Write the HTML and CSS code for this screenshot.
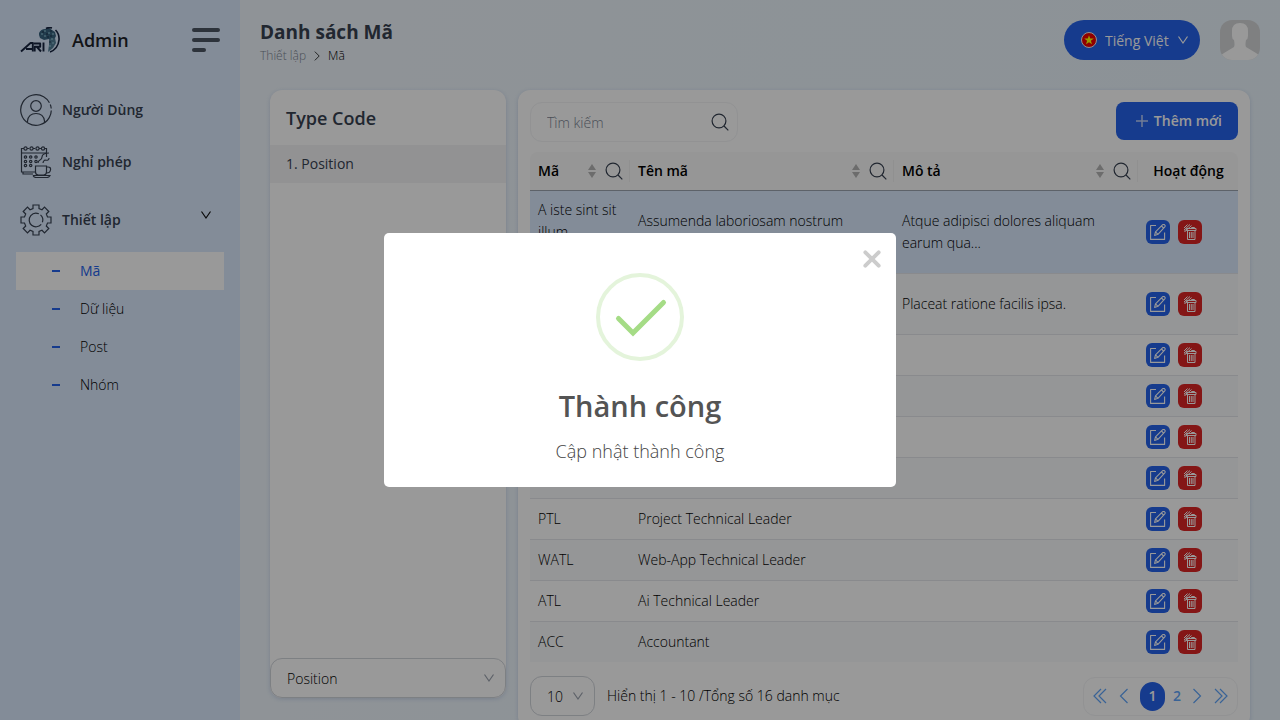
FILE: index.html
```html
<!DOCTYPE html>
<html lang="vi">
<head>
<meta charset="utf-8">
<meta name="viewport" content="width=device-width, initial-scale=1">
<title>Danh sách Mã</title>
<link rel="stylesheet" href="styles.css">
</head>
<body>
<svg class="sprite" aria-hidden="true">
  <symbol id="chevron" viewBox="0 0 12 12"><path d="M1.500 2.500 6 9l4.500-6.500" fill="none" stroke="currentColor" stroke-width="1.200"/></symbol>
  <symbol id="next" viewBox="0 0 16 16"><path d="m4.500 1 7 7-7 7" fill="none" stroke="currentColor" stroke-width="1.200"/></symbol>
  <symbol id="prev" viewBox="0 0 16 16"><path d="m11.500 1-7 7 7 7" fill="none" stroke="currentColor" stroke-width="1.200"/></symbol>
  <symbol id="last" viewBox="0 0 16 16"><path d="m2 1 7 7-7 7M7 1l7 7-7 7" fill="none" stroke="currentColor" stroke-width="1.200"/></symbol>
  <symbol id="first" viewBox="0 0 16 16"><path d="M14 1 7 8l7 7M9 1 2 8l7 7" fill="none" stroke="currentColor" stroke-width="1.200"/></symbol>
  <symbol id="search" viewBox="0 0 18 18"><g fill="none" stroke="currentColor" stroke-width="1.200"><circle cx="8" cy="8" r="6.900"/><path d="m13 13 4.300 4.300"/></g></symbol>
  <symbol id="sort" viewBox="0 0 8 14"><path d="M4 0l4 6H0zM4 14l4-6H0z" fill="currentColor"/></symbol>
  <symbol id="edit" viewBox="0 0 16 16"><g fill="none" stroke="currentColor" stroke-width="1.100" stroke-linejoin="round"><path d="M6 1.500H.600v13.900h14V8.500"/><path d="m4.600 11.400.900-3.600L12.700.700q1.200-.700 2 .200.900.900.100 1.900L8 10.300zM11.500 2l2.300 2.300M5.500 7.800 8 10.300"/></g></symbol>
  <symbol id="trash" viewBox="0 0 16 16"><g fill="none" stroke="currentColor" stroke-linejoin="round"><path d="M4.500 4.500h9.500v2H4.500zM5.500 6.500v9h7.500v-9M7.500 8v6M9.250 8v6M11 8v6M9.500 4.500v-1h3v1"/><path d="M2 4 5.500.500M2 6 8 .500M3 7.500 9.500 1.500M2 7.500l1.500-1.300"/></g></symbol>
</svg>

<div class="app">
  <aside class="sidebar">
    <div class="brand">
      <svg class="logo" viewBox="0 0 40 26" role="img" aria-label="ARI">
        <g fill="none" stroke="#16233f" stroke-width="1.900" stroke-linejoin="round">
          <path d="m1 24.500 9.500-8.500h2.300v8.500M6 22h6.500"/><path d="M13.500 16.500h6.700v3.300h-5.500v4.700M17 20l4 4.500M23.500 15.500v9"/>
        </g>
        <path d="M19 6q2-4 6-4l4-1 6 4 1 4-2 4-4 1-1-2-5 1-4-2-1-3z" fill="#38637f"/>
        <path d="m29 12 6-1 1 5-3 5-5 4 1-7z" fill="#527e96"/>
        <path d="M26 1.500q3-1.500 6-.500M35.500 3q4 4 3.500 10-1 9-9 12" fill="none" stroke="#16233f" stroke-width="1.600"/>
        <g fill="#a2dae6"><circle cx="22" cy="7" r=".800"/><circle cx="25" cy="4" r=".800"/><circle cx="29" cy="6" r=".800"/><circle cx="25" cy="9" r=".800"/><circle cx="33" cy="7" r=".800"/><circle cx="32" cy="12" r=".800"/><circle cx="33" cy="16" r=".800"/><circle cx="30" cy="19" r=".800"/></g>
        <g fill="#16233f"><circle cx="23" cy="5" r=".700"/><circle cx="27" cy="7" r=".700"/><circle cx="31" cy="9" r=".700"/><circle cx="31" cy="4" r=".700"/><circle cx="28" cy="10" r=".700"/><circle cx="30" cy="15" r=".700"/></g>
      </svg>
      <span class="brand-name">Admin</span>
      <button class="menu-toggle" type="button" aria-label="Menu"><i></i><i></i><i></i></button>
    </div>
    <nav>
      <a class="nav-item" href="#users">
        <svg viewBox="0 0 32 32" class="nav-icon"><circle cx="16" cy="16" r="15.300" stroke-dasharray="80 2 4 2 8.130" transform="rotate(30 16 16)"/><circle cx="16" cy="12" r="5.300"/><path d="M7.500 28v-1q1-7.500 8.500-7.500t8.500 7.500v1"/></svg>
        Người Dùng
      </a>
      <a class="nav-item" href="#leave">
        <svg viewBox="0 0 32 32" class="nav-icon"><path d="M4 2.500H1.500V26H16M1.500 7h25M7 2.500h2m4 0h2m4 0h2m4 0h1.500V11M3 26v2h10"/><g><circle cx="5.500" cy="2.500" r="1.600"/><circle cx="11.500" cy="2.500" r="1.600"/><circle cx="17.500" cy="2.500" r="1.600"/><circle cx="23" cy="2.500" r="1.600"/></g><g><circle cx="5.500" cy="11" r="1.200"/><circle cx="10.700" cy="11" r="1.200"/><circle cx="16" cy="11" r="1.200"/><circle cx="5.500" cy="15.500" r="1.200"/><circle cx="10.700" cy="15.500" r="1.200"/><circle cx="16" cy="15.500" r="1.200"/><circle cx="5.500" cy="19.500" r="1.200"/><circle cx="10.700" cy="19.500" r="1.200"/></g><path d="M15.500 20h11v6q0 3-3 3h-5q-3 0-3-3zM26.500 21h1.500q3 0 2.500 3-.500 3-4 3M13 29.500h17q-1 2-3 2H16q-2 0-3-2M18 17q0-2 2-3t2-3 2-3q2-1 5-1M23 17q0-2 2-3 4 1 4-2"/></svg>
        Nghỉ phép
      </a>
      <a class="nav-item nav-group" href="#settings">
        <svg viewBox="0 0 32 32" class="nav-icon"><path d="M13 1h6v3.500l3 1.200 2.500-2.500 4.300 4.300-2.500 2.500 1.200 3H31v6h-3.500l-1.200 3 2.500 2.500-4.300 4.300-2.500-2.500-3 1.200V31h-6v-3.500l-3-1.200-2.500 2.500-4.300-4.300L5.700 22l-1.200-3H1v-6h3.500l1.200-3-2.500-2.500 4.300-4.300L10 5.700l3-1.200z"/><circle cx="16" cy="16" r="6.800" stroke-dasharray="30 2 8 2.730" transform="rotate(40 16 16)"/></svg>
        <span>Thiết lập</span>
        <svg class="chev"><use href="#chevron"/></svg>
      </a>
      <ul class="subnav">
        <li><a class="active" href="#code">Mã</a></li>
        <li><a href="#data">Dữ liệu</a></li>
        <li><a href="#post">Post</a></li>
        <li><a href="#group">Nhóm</a></li>
      </ul>
    </nav>
  </aside>

  <main class="main">
    <header class="topbar">
      <div class="heading">
        <h1>Danh sách Mã</h1>
        <div class="crumbs"><a href="#settings">Thiết lập</a><svg><use href="#next"/></svg><span>Mã</span></div>
      </div>
      <div class="lang">
        <svg class="flag" viewBox="0 0 16 16"><circle cx="8" cy="8" r="7.500" fill="#f00000" stroke="#eee"/><path d="m8 3.200 1.200 3.400h3.600L9.900 8.800l1.100 3.500-3-2.100-3 2.100 1.100-3.500-2.900-2.200h3.600z" fill="#ff0"/></svg>
        <select aria-label="Ngôn ngữ"><option>Tiếng Việt</option></select>
        <svg class="chev"><use href="#chevron"/></svg>
      </div>
      <svg class="avatar" viewBox="0 0 40 40" role="img" aria-label="Avatar"><path d="M0 0h40v40H0z" fill="#d4d6d8"/><path d="M20 3q8 0 8 8v5q0 3-2 4-1 5 0 7l10 6 4 3v4H0v-4l4-3 10-6q1-2 0-7-2-1-2-4v-5q0-8 8-8" fill="#fff"/></svg>
    </header>

    <div class="content">
      <section class="card types">
        <h2>Type Code</h2>
        <a class="type" href="#position">1. Position</a>
        <div class="select-box types-select">
          <select aria-label="Type Code"><option>Position</option></select>
          <svg class="chev"><use href="#chevron"/></svg>
        </div>
      </section>

      <section class="card list">
        <div class="toolbar">
          <label class="search"><input type="text" placeholder="Tìm kiếm" aria-label="Tìm kiếm"><svg class="glass"><use href="#search"/></svg></label>
          <button class="add" type="button"><svg viewBox="0 0 12 12"><path d="M6 0v12M0 6h12" stroke="currentColor" stroke-width="1.500"/></svg>Thêm mới</button>
        </div>
        <table>
          <colgroup><col class="c-code"><col class="c-name"><col class="c-desc"><col class="c-act"></colgroup>
          <thead><tr>
            <th><div class="th">Mã<svg class="sort"><use href="#sort"/></svg><svg class="glass"><use href="#search"/></svg></div></th>
            <th><div class="th">Tên mã<svg class="sort"><use href="#sort"/></svg><svg class="glass"><use href="#search"/></svg></div></th>
            <th><div class="th">Mô tả<svg class="sort"><use href="#sort"/></svg><svg class="glass"><use href="#search"/></svg></div></th>
            <th class="center">Hoạt động</th>
          </tr></thead>
          <tbody id="rows"></tbody>
        </table>
        <footer class="footer">
          <div class="select-box size"><select aria-label="Số dòng"><option>10</option></select><svg class="chev"><use href="#chevron"/></svg></div>
          <span>Hiển thị 1 - 10 /Tổng số 16 danh mục</span>
          <div class="pager">
            <button type="button" aria-label="Trang đầu"><svg><use href="#first"/></svg></button>
            <button type="button" aria-label="Trang trước"><svg><use href="#prev"/></svg></button>
            <button type="button" class="current">1</button>
            <button type="button" class="page">2</button>
            <button type="button" aria-label="Trang sau"><svg><use href="#next"/></svg></button>
            <button type="button" aria-label="Trang cuối"><svg><use href="#last"/></svg></button>
          </div>
        </footer>
      </section>
    </div>
  </main>
</div>

<div class="overlay">
  <div class="modal" role="dialog" aria-modal="true" aria-labelledby="modal-title">
    <button class="close" type="button" aria-label="Đóng"><svg viewBox="0 0 18 18"><path d="m3 3 12 12M15 3 3 15" stroke="#ccc" stroke-width="3.500" stroke-linecap="round"/></svg></button>
    <svg class="success" viewBox="0 0 88 88" fill="none"><circle cx="44" cy="44" r="42" stroke="#e4f4db" stroke-width="4"/><path d="m22.500 45.500 14.500 14.500 30.500-30.500" stroke="#a5dc86" stroke-width="5" stroke-linecap="round"/></svg>
    <h2 id="modal-title">Thành công</h2>
    <p>Cập nhật thành công</p>
  </div>
</div>
<script src="rows.js"></script>
</body>
</html>
```
FILE: rows.js
```js
const rows = [
  ["A iste sint sit<br>illum<br>quia...", "Assumenda laboriosam nostrum<br>quis...", "Atque adipisci dolores aliquam<br>earum qua...", "selected"],
  ["", "", "Placeat ratione facilis ipsa.", "tall"],
  ["", "", ""], ["", "", ""], ["", "", ""], ["", "", ""],
  ["PTL", "Project Technical Leader", ""],
  ["WATL", "Web-App Technical Leader", ""],
  ["ATL", "Ai Technical Leader", ""],
  ["ACC", "Accountant", ""]
];
document.getElementById("rows").innerHTML = rows.map(([code, name, desc, cls = ""]) =>
  `<tr class="${cls}"><td>${code}</td><td>${name}</td><td>${desc}</td><td><div class="actions">
  <button class="edit" type="button" aria-label="Sửa"><svg><use href="#edit"/></svg></button>
  <button class="delete" type="button" aria-label="Xóa"><svg><use href="#trash"/></svg></button></div></td></tr>`).join("");
```
FILE: styles.css
```css
* { box-sizing: border-box; }
body { margin: 0; overflow: hidden; font: 300 14px/22px "Open Sans", "Noto Sans", sans-serif; color: #000; }
button, select, input { font: inherit; color: inherit; border: 0; padding: 0; margin: 0; background: none; outline: 0; }
select { appearance: none; flex: 1; min-width: 0; padding-top: 2px; }
a { color: inherit; text-decoration: none; }
h1, h2, p, ul { margin: 0; padding: 0; list-style: none; }
svg { flex: none; display: block; }
.sprite { position: absolute; width: 0; height: 0; }
.chev { width: 12px; height: 12px; }
.glass { width: 18px; height: 18px; color: #374151; }

.app { display: flex; height: 100vh; background: linear-gradient(100deg, #f0f6fc, #e9f4fc); }
.sidebar { flex: 0 0 240px; background: #dbeafe; }
.brand { display: flex; align-items: center; height: 80px; padding: 0 20px; gap: 12px; }
.logo { width: 40px; height: 26px; }
.brand-name { font-size: 18px; font-weight: 600; flex: 1; color: #1f2329; }
.menu-toggle { display: flex; flex-direction: column; gap: 6px; width: 28px; }
.menu-toggle i { height: 4px; border-radius: 2px; background: #4b5563; width: 28px; }
.menu-toggle i:last-child { width: 14px; }
.nav-item { display: flex; align-items: center; gap: 10px; height: 52px; padding: 0 12px 0 20px; font-weight: 600; color: #374151; }
nav { padding-top: 4px; }
.nav-group { height: 64px; }
.nav-group span { flex: 1; }
.nav-group .chev { margin: 0 16px 10px 0; color: #111; }
.nav-icon { width: 32px; height: 32px; fill: none; stroke: #374151; stroke-width: 1.2; }
.subnav { padding: 0 16px; }
.subnav a { display: flex; align-items: center; gap: 20px; height: 38px; padding-left: 36px; }
.subnav a::before { content: ""; width: 8px; height: 2px; background: #2563eb; }
.subnav a.active { background: #fff; color: #2563eb; font-weight: 400; }

.main { flex: 1; min-width: 0; }
.topbar { display: flex; align-items: center; height: 80px; padding: 0 20px; }
.heading { flex: 1; padding-top: 4px; }
h1 { font-size: 19px; line-height: 28px; font-weight: 700; color: #374151; }
.crumbs { display: flex; align-items: center; gap: 6px; font-size: 12px; line-height: 20px; }
.crumbs a { color: #7c8593; }
.crumbs svg { width: 10px; height: 10px; }
.lang { display: flex; align-items: center; gap: 8px; width: 136px; height: 40px; padding: 0 11px 0 17px; margin-right: 20px; border-radius: 20px; background: #2563eb; color: #fff; font-weight: 400; }
.flag { width: 16px; height: 16px; }
.avatar { width: 40px; height: 40px; border-radius: 12px; }

.content { display: flex; align-items: flex-start; gap: 12px; padding: 10px 30px; }
.card { background: #fff; border-radius: 12px; box-shadow: 0 1px 4px rgba(59, 90, 160, .2); }
.types { display: flex; flex-direction: column; flex: 0 0 236px; height: calc(100vh - 112px); }
.types h2 { font-size: 18px; line-height: 28px; font-weight: 600; color: #374151; padding: 14px 16px 13px; }
.type { padding: 8px 16px; background: #f3f4f6; font-weight: 500; color: #374151; }
.select-box { display: flex; align-items: center; height: 40px; padding: 0 10px 0 16px; border: 1px solid #d1d5db; border-radius: 12px; }
.select-box .chev { color: #9ca3af; }
.types-select { margin-top: auto; }

.list { flex: 1; min-width: 0; padding: 12px; }
.toolbar { display: flex; justify-content: space-between; align-items: flex-start; }
.search { display: flex; align-items: center; width: 208px; height: 40px; padding: 0 8px 0 16px; border: 1px solid #f3f4f6; border-radius: 12px; }
.search input { flex: 1; min-width: 0; padding-top: 2px; }
.search input::placeholder { color: #7c8593; opacity: 1; }
.add { display: flex; align-items: center; gap: 6px; height: 38px; padding: 0 16px 0 20px; border-radius: 8px; background: #2563eb; color: #fff; font-weight: 600; }
.add svg { width: 12px; height: 12px; opacity: .7; }

table { width: 100%; margin-top: 10px; table-layout: fixed; border-spacing: 0; }
.c-code, .c-act { width: 100px; }
.c-name { width: 264px; }
th { height: 39px; padding: 0 7px 0 8px; background: #fafafa; border-bottom: 1px solid #9ca3af; font-weight: 600; text-align: left; position: relative; }
th:first-child { border-radius: 8px 0 0; }
th:last-child { border-radius: 0 8px 0 0; }
th:not(:last-child)::after { content: ""; position: absolute; right: 0; top: 8px; height: 22px; width: 1px; background: #f0f0f0; }
.th { display: flex; align-items: center; gap: 9px; }
.sort { width: 8px; height: 14px; margin-left: auto; color: #b5b5b5; }
th.center { text-align: center; }
td { height: 41px; padding: 8px; border-bottom: 1px solid #e5e7eb; }
tbody tr:last-child td { height: 40px; border-bottom: 0; }
tbody tr:nth-child(even) td { background: #f8fafc; }
tbody .selected td { background: #dbeafe; height: 83px; }
tbody .tall td { height: 61px; }
.actions { display: flex; gap: 8px; }
.actions button { display: grid; place-items: center; width: 24px; height: 24px; border-radius: 6px; color: #fff; }
.actions svg { width: 16px; height: 16px; }
.actions .edit { background: #2563eb; }
.actions .delete { background: #dc2626; }

.footer { display: flex; align-items: center; gap: 12px; margin-top: 14px; }
.size { width: 65px; }
.pager { display: flex; align-items: center; gap: 8px; margin-left: auto; height: 39px; padding: 0 8px; border: 1px solid #f3f4f6; border-radius: 12px; color: #60a5fa; font-weight: 600; }
.pager svg { width: 16px; height: 16px; }
.pager .current { width: 25px; height: 29px; border-radius: 13px; background: #2563eb; color: #fff; }

.overlay { position: fixed; inset: 0; display: grid; place-items: center; background: rgba(0, 0, 0, .4); }
.modal { position: relative; display: flex; flex-direction: column; align-items: center; width: 512px; max-width: 90%; padding: 40px 20px 24px; border-radius: 5px; background: #fff; color: #545454; }
.close { position: absolute; top: 16px; right: 14px; width: 20px; height: 20px; }
.success { width: 88px; height: 88px; }
.modal h2 { margin-top: 25px; font-size: 29px; line-height: 40px; font-weight: 600; }
.modal p { margin-top: 13px; font-size: 18px; line-height: 24px; color: #444; }
```
